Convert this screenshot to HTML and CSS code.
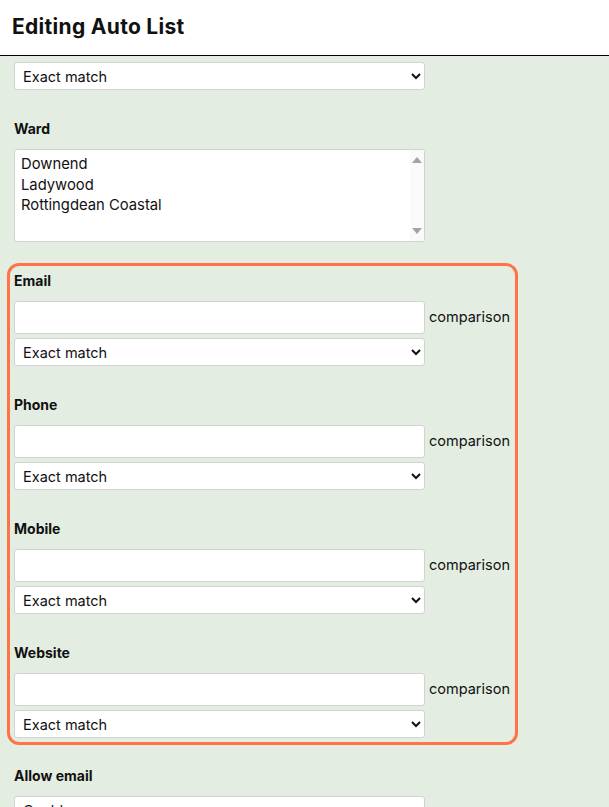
FILE: index.html
```html
<!DOCTYPE html>
<html>
<head>
<meta charset="utf-8">
<link rel="stylesheet" href="styles.css">
</head>
<body>
<header class="topbar"><h1 class="title">Editing Auto List</h1></header>
<main class="content">
  <div class="field first">
    <select class="ctl"><option>Exact match</option></select>
  </div>
  <div class="field">
    <div class="label">Ward</div>
    <div class="areawrap">
      <textarea class="area">Downend
Ladywood
Rottingdean Coastal</textarea>
      <div class="scroll"><span class="arrow up"></span><span class="arrow down"></span></div>
    </div>
  </div>
  <div class="highlight">
    <div class="field">
      <div class="label">Email</div>
      <div class="row"><input class="ctl text" type="text"><span class="cmp">comparison</span></div>
      <select class="ctl"><option>Exact match</option></select>
    </div>
    <div class="field">
      <div class="label">Phone</div>
      <div class="row"><input class="ctl text" type="text"><span class="cmp">comparison</span></div>
      <select class="ctl"><option>Exact match</option></select>
    </div>
    <div class="field">
      <div class="label">Mobile</div>
      <div class="row"><input class="ctl text" type="text"><span class="cmp">comparison</span></div>
      <select class="ctl"><option>Exact match</option></select>
    </div>
    <div class="field">
      <div class="label">Website</div>
      <div class="row"><input class="ctl text" type="text"><span class="cmp">comparison</span></div>
      <select class="ctl"><option>Exact match</option></select>
    </div>
  </div>
  <div class="field after">
    <div class="label">Allow email</div>
    <select class="ctl"><option>Could</option></select>
  </div>
</main>
</body>
</html>
```

FILE: styles.css
```css
html, body {
  margin: 0;
  padding: 0;
  background: #e3ede1;
  font-family: Inter, "Noto Sans", sans-serif;
  color: #111;
}
.topbar {
  background: #fff;
  height: 56px;
  border-bottom: 1px solid #000;
  box-sizing: border-box;
  padding: 0 12px;
  display: flex;
  align-items: center;
}
.title {
  margin: 0;
  font-size: 21px;
  font-weight: 700;
  letter-spacing: 0.3px;
  position: relative;
  top: -1px;
}
.content {
  padding: 6px 14px 0 14px;
  overflow: hidden;
  height: 750px;
}
.field {
  padding-top: 30px;
}
.field.first {
  padding-top: 0;
}
.field.after {
  padding-top: 22px;
}
.label {
  font-size: 14px;
  font-weight: 700;
  line-height: 18px;
  margin-bottom: 11px;
}
.ctl {
  display: block;
  width: 411px;
  box-sizing: border-box;
  background: #fff;
  border: 1px solid #d2d2d2;
  border-radius: 3px;
  font-family: Inter, "Noto Sans", sans-serif;
  font-size: 14.5px;
  color: #111;
  margin: 0;
}
select.ctl {
  height: 28px;
  padding: 0 4px;
}
.text {
  height: 33px;
  padding: 0 6px;
}
.row {
  display: flex;
  align-items: center;
  gap: 4px;
  margin-bottom: 4px;
}
.cmp {
  font-size: 14.5px;
  position: relative;
  top: -1px;
}
.areawrap {
  position: relative;
  width: 411px;
}
.area {
  display: block;
  width: 411px;
  height: 93px;
  box-sizing: border-box;
  border: 1px solid #d2d2d2;
  border-radius: 3px;
  background: #fff;
  font-family: Inter, "Noto Sans", sans-serif;
  font-size: 14.8px;
  line-height: 20.5px;
  padding: 4px 6px;
  resize: none;
  overflow: hidden;
  color: #111;
  margin: 0;
}
.scroll {
  position: absolute;
  top: 1px;
  right: 1px;
  bottom: 1px;
  width: 14px;
  background: #fafafa;
  border-radius: 0 2px 2px 0;
}
.arrow {
  position: absolute;
  left: 2px;
  width: 0;
  height: 0;
  border-left: 5px solid transparent;
  border-right: 5px solid transparent;
}
.arrow.up {
  top: 7px;
  border-bottom: 6px solid #a3a3a3;
}
.arrow.down {
  bottom: 7px;
  border-top: 6px solid #a3a3a3;
}
.highlight {
  margin: 21px 0 0 -7px;
  width: 511px;
  box-sizing: border-box;
  border: 3px solid #ff7447;
  border-radius: 12px;
  padding: 0 0 4px 4px;
}
.highlight .field:first-child {
  padding-top: 6px;
}
```
